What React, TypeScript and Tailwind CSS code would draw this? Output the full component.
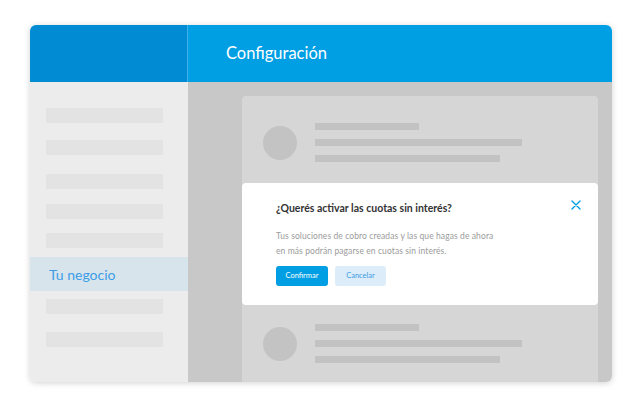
import React from "react";

const font = { fontFamily: "Lato, 'Open Sans', 'Liberation Sans', sans-serif" };

function Row({ pt }: { pt: string }) {
  return (
    <div className={`${pt} pl-[21px]`}>
      <div className="flex items-center gap-[18px]">
        <div className="h-[34px] w-[34px] rounded-full bg-[#c3c3c3]" />
        <div className="flex flex-col gap-[9px]">
          <div className="h-[7px] w-[104px] bg-[#c2c2c2]" />
          <div className="h-[7px] w-[207px] bg-[#c2c2c2]" />
          <div className="h-[7px] w-[185px] bg-[#c2c2c2]" />
        </div>
      </div>
    </div>
  );
}

export default function App() {
  return (
    <div className="w-[642px] h-[407px] bg-white pt-[25px] pl-[30px]" style={font}>
      <div className="w-[582px] h-[357px] rounded-[6px] overflow-hidden flex flex-col shadow-[0_1px_6px_rgba(0,0,0,0.18)]">
        <div className="flex h-[57px] shrink-0">
          <div className="w-[158px] bg-[#008bd2] border-r border-[#3fb0e8]" />
          <div className="flex-1 bg-[#009ee3] flex items-center pl-[38px]">
            <span className="text-white text-[16.5px]">Configuración</span>
          </div>
        </div>
        <div className="flex flex-1 min-h-0">
          <div className="w-[158px] shrink-0 bg-[#ececec] flex flex-col pt-[26px]">
            <div className="ml-[16px] w-[117px] h-[15px] bg-[#e3e3e3]" />
            <div className="ml-[16px] mt-[17px] w-[117px] h-[15px] bg-[#e3e3e3]" />
            <div className="ml-[16px] mt-[19px] w-[117px] h-[15px] bg-[#e3e3e3]" />
            <div className="ml-[16px] mt-[15px] w-[117px] h-[15px] bg-[#e3e3e3]" />
            <div className="ml-[16px] mt-[14px] w-[117px] h-[15px] bg-[#e3e3e3]" />
            <div className="mt-[9px] h-[34px] bg-[#d7e4ec] flex items-center pl-[19px]">
              <span className="text-[14px] text-[#3c9de6]">Tu negocio</span>
            </div>
            <div className="ml-[16px] mt-[8px] w-[117px] h-[15px] bg-[#e3e3e3]" />
            <div className="ml-[16px] mt-[18px] w-[117px] h-[15px] bg-[#e3e3e3]" />
          </div>
          <div className="flex-1 bg-[#c8c8c8] pl-[54px] pr-[14px] pt-[14px] flex flex-col">
            <div className="flex-1 bg-[#d6d6d6] rounded-t-[4px] flex flex-col">
              <div className="h-[87px]">
                <Row pt="pt-[27px]" />
              </div>
              <div className="h-[122px] bg-white rounded-[4px] pl-[34px] pr-[17px] pt-[18px] flex flex-col">
                <div className="flex items-start justify-between">
                  <span className="text-[10.5px] leading-[14px] font-bold text-[#333333]">
                    ¿Querés activar las cuotas sin interés?
                  </span>
                  <svg width="10" height="10" viewBox="0 0 10 10" className="mt-[-1px]">
                    <path d="M1 1L9 9M9 1L1 9" stroke="#009ee3" strokeWidth="1.4" strokeLinecap="round" />
                  </svg>
                </div>
                <div className="mt-[14px] text-[8.5px] tracking-[0.1px] leading-[15px] text-[#9b9b9b]">
                  Tus soluciones de cobro creadas y las que hagas de ahora
                  <br />
                  en más podrán pagarse en cuotas sin interés.
                </div>
                <div className="mt-[7px] flex gap-[7px]">
                  <div className="w-[52px] h-[20px] rounded-[3px] bg-[#009ee3] text-white text-[7.5px] flex items-center justify-center">
                    Confirmar
                  </div>
                  <div className="w-[51px] h-[20px] rounded-[3px] bg-[#dcecf9] text-[#3c9de6] text-[7.5px] flex items-center justify-center">
                    Cancelar
                  </div>
                </div>
              </div>
              <Row pt="pt-[19px]" />
            </div>
          </div>
        </div>
      </div>
    </div>
  );
}
